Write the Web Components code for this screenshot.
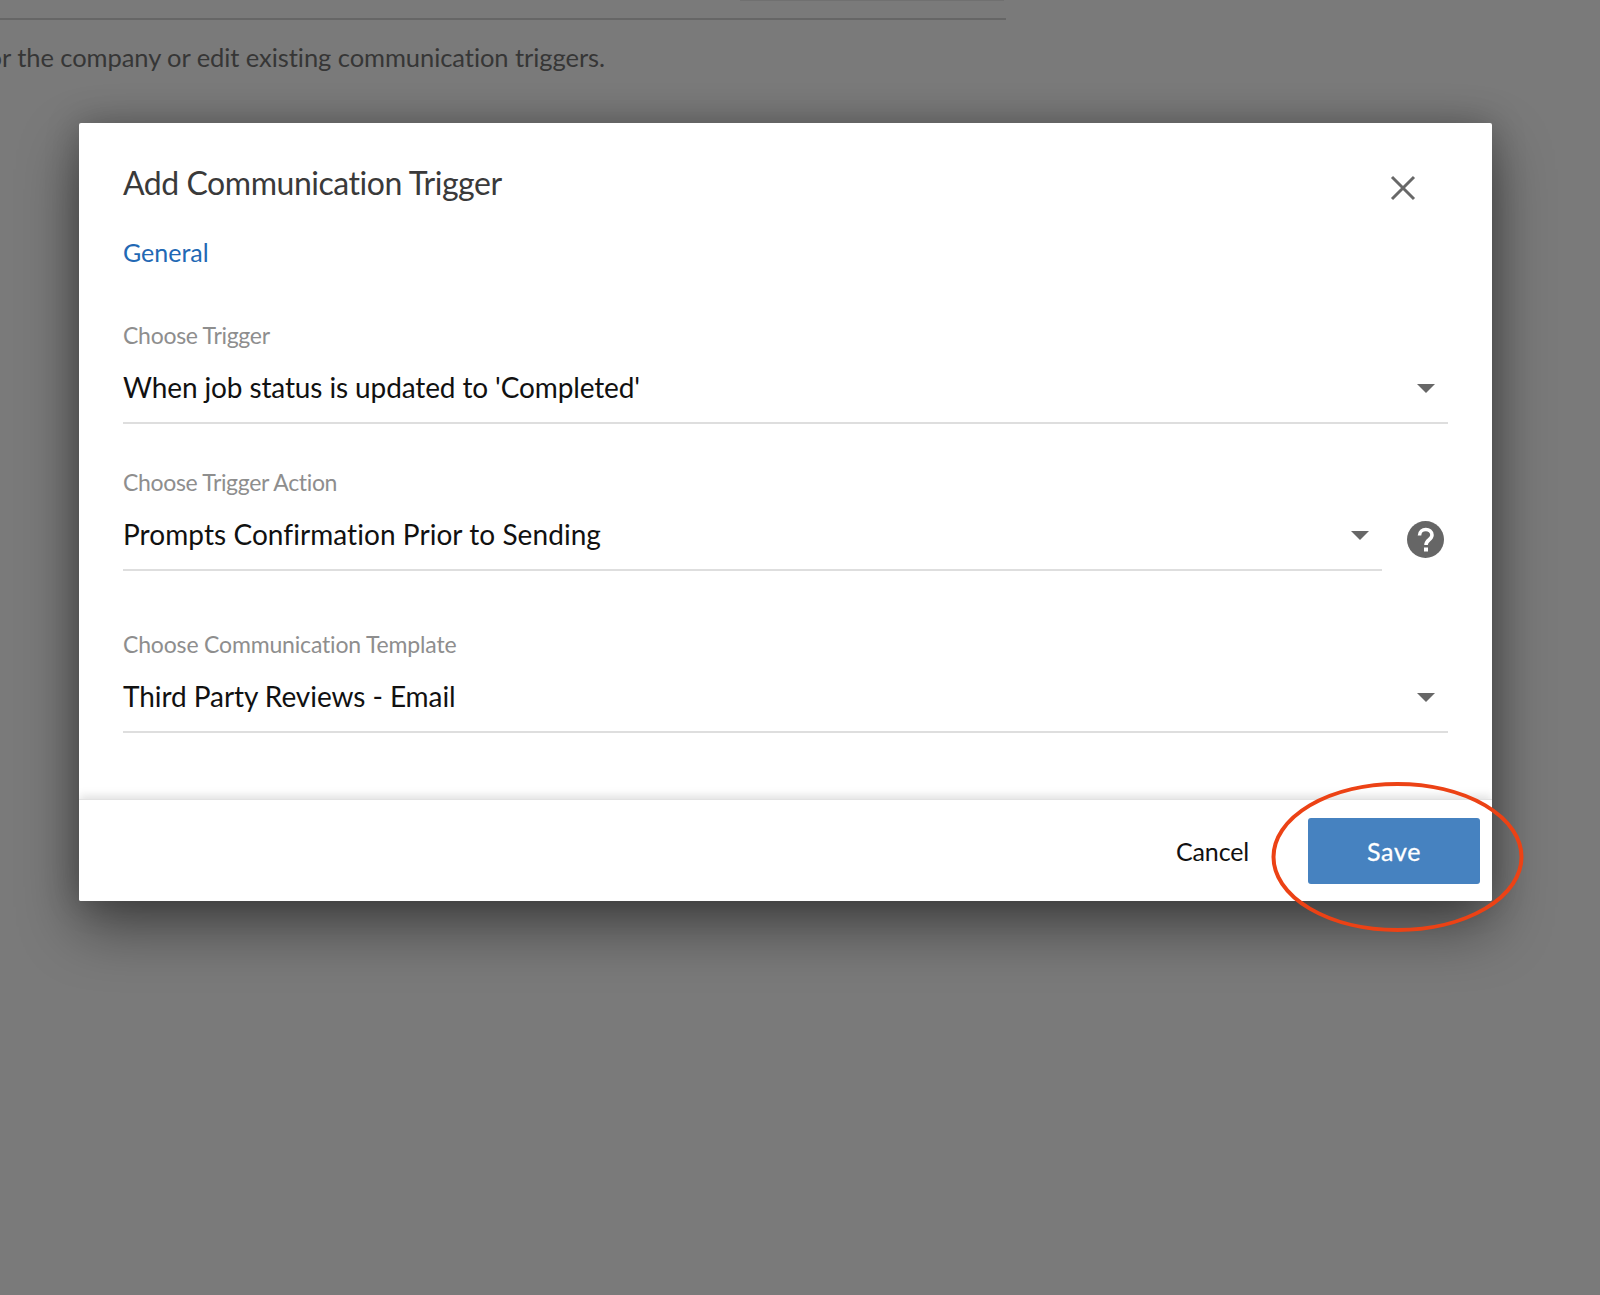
<!DOCTYPE html>
<html>
<head>
<meta charset="utf-8">
<style>
  html, body { margin: 0; height: 100%; }
  body { background: #7a7a7a; overflow: hidden; font-family: "Lato", "Liberation Sans", sans-serif; }
</style>
</head>
<body>
<page-backdrop>
  <trigger-modal heading="Add Communication Trigger" tab="General">
    <select-field label="Choose Trigger" value="When job status is updated to 'Completed'" style="--label-track: -0.28px; --value-track: -0.12px"></select-field>
    <select-field label="Choose Trigger Action" value="Prompts Confirmation Prior to Sending" style="--label-track: -0.34px; --value-track: 0.06px" help></select-field>
    <select-field label="Choose Communication Template" value="Third Party Reviews - Email" style="--label-track: -0.17px; --value-track: -0.06px"></select-field>
  </trigger-modal>
</page-backdrop>

<script>
class PageBackdrop extends HTMLElement {
  constructor() {
    super();
    this.attachShadow({ mode: "open" });
  }

  connectedCallback() {
    this.shadowRoot.innerHTML = `
    <style>
      :host { display: block; height: 1295px; background: #7a7a7a; }
      .tab-edge { width: 264px; height: 1px; margin-left: 740px; background: #707070; }
      .rule { width: 1006px; height: 2px; margin-top: 17px; background: #666; }
      .intro {
        width: 605px;
        height: 40px;
        margin-top: 17px;
        display: flex;
        justify-content: flex-end;
        overflow: hidden;
        white-space: nowrap;
        font-size: 25.5px;
        letter-spacing: -0.06px;
        line-height: 40px;
        color: #363636;
      }
      .stage { margin: 46px 0 0 79px; }
    </style>
    <div class="tab-edge"></div>
    <div class="rule"></div>
    <div class="intro"><span>or the company or edit existing communication triggers.</span></div>
    <div class="stage"><slot></slot></div>`;
  }
}

class TriggerModal extends HTMLElement {
  constructor() {
    super();
    this.attachShadow({ mode: "open" });
  }

  connectedCallback() {
    this.shadowRoot.innerHTML = `
    <style>
      :host {
        display: block;
        position: relative;
        width: 1413px;
        height: 778px;
      }
      .panel {
        height: 100%;
        display: flex;
        flex-direction: column;
        overflow: hidden;
        background: #fff;
        border-radius: 2px;
        box-shadow: 0 26px 60px rgba(0, 0, 0, .45), 0 0 34px rgba(0, 0, 0, .22);
      }
      .body { flex: 1; padding: 36px 44px 0; }
      .head { display: flex; justify-content: space-between; align-items: flex-start; }
      h2 {
        margin: 0;
        font-size: 32px;
        font-weight: 400;
        line-height: 48px;
        letter-spacing: -0.46px;
        color: #3a3a3a;
      }
      .close { display: block; margin: 16px 32px 0 0; }
      .tab {
        margin-top: 29px;
        font-size: 25px;
        line-height: 32px;
        letter-spacing: 0;
        color: #2268b4;
      }
      .fields { display: flex; flex-direction: column; margin-top: 51px; }
      footer {
        height: 102px;
        display: flex;
        align-items: center;
        justify-content: flex-end;
        gap: 59px;
        padding: 0 12px 0 0;
        box-sizing: border-box;
        border-top: 1px solid #e2e2e2;
        box-shadow: 0 -3px 9px rgba(0, 0, 0, .13);
        background: #fff;
        position: relative;
      }
      .cancel { font-size: 25px; letter-spacing: -0.15px; color: #111; }
      .save {
        width: 172px;
        height: 66px;
        display: flex;
        align-items: center;
        justify-content: center;
        border-radius: 3px;
        background: #4682c0;
        color: #fff;
        font-size: 25px;
        letter-spacing: 0.7px;
        -webkit-text-stroke: 0.3px #fff;
      }
      .circle { position: absolute; left: 1190px; top: 652px; pointer-events: none; }
    </style>
    <div class="panel">
      <div class="body">
        <div class="head">
          <h2>${this.getAttribute("heading")}</h2>
          <svg class="close" width="26" height="26" viewBox="0 0 26 26">
            <path d="M2 2 L24 24 M24 2 L2 24" stroke="#686868" stroke-width="3" fill="none"/>
          </svg>
        </div>
        <div class="tab">${this.getAttribute("tab")}</div>
        <div class="fields"><slot></slot></div>
      </div>
      <footer>
        <span class="cancel">Cancel</span>
        <span class="save">Save</span>
      </footer>
    </div>
    <svg class="circle" width="260" height="164" viewBox="0 0 260 164">
      <ellipse cx="128.5" cy="82" rx="124" ry="73" fill="none" stroke="#ec4215" stroke-width="4"/>
    </svg>`;
  }
}

class SelectField extends HTMLElement {
  constructor() {
    super();
    this.attachShadow({ mode: "open" });
  }

  connectedCallback() {
    const help = this.hasAttribute("help");
    this.shadowRoot.innerHTML = `
    <style>
      :host { display: flex; align-items: flex-start; gap: 25px; margin-bottom: 42px; }
      :host([help]) { margin-bottom: 57px; }
      .field { flex: 1; border-bottom: 2px solid #dedede; height: 105px; box-sizing: border-box; }
      label {
        display: block;
        height: 32px;
        font-size: 23px;
        line-height: 32px;
        letter-spacing: var(--label-track, -0.2px);
        color: #8e8e8e;
      }
      .row {
        height: 52px;
        margin-top: 10px;
        display: flex;
        align-items: center;
        justify-content: space-between;
        padding-right: 13px;
      }
      .value { font-size: 28px; letter-spacing: var(--value-track, -0.1px); color: #111; }
      .caret { width: 0; height: 0; margin-top: 2px; border: 9px solid transparent; border-top: 9px solid #676767; border-bottom: 0; }
      .help { display: block; margin: 55px 4px 0 0; }
    </style>
    <div class="field">
      <label>${this.getAttribute("label")}</label>
      <div class="row">
        <span class="value">${this.getAttribute("value")}</span>
        <span class="caret"></span>
      </div>
    </div>
    ${help ? `<svg class="help" width="37" height="37" viewBox="0 0 37 37">
      <circle cx="18.5" cy="18.5" r="18.5" fill="#666"/>
      <path d="M12.5 14.5 C12.5 6.5 25 6.5 25 14 C25 19 19 18.5 19 24" stroke="#fff" stroke-width="3.6" fill="none"/>
      <rect x="17" y="26.5" width="4" height="4" fill="#fff"/>
    </svg>` : ""}`;
  }
}

customElements.define("page-backdrop", PageBackdrop);
customElements.define("trigger-modal", TriggerModal);
customElements.define("select-field", SelectField);
</script>
</body>
</html>
